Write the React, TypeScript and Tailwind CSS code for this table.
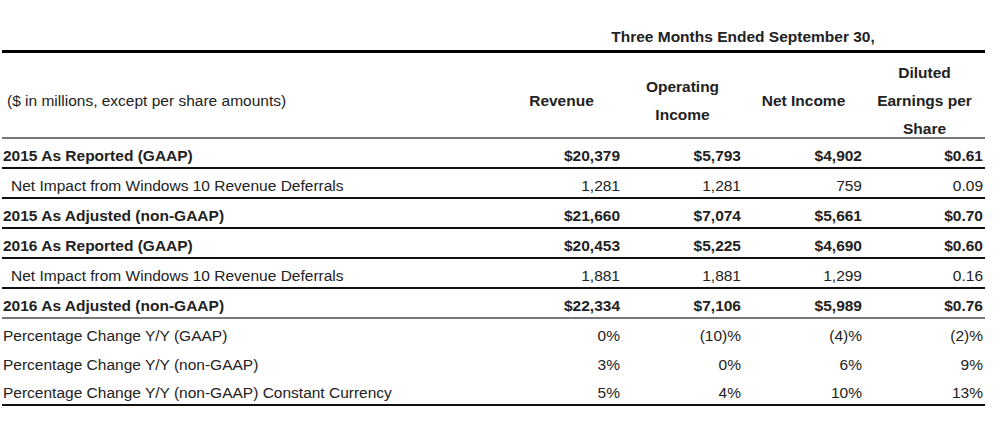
const cols = "grid grid-cols-[499px_121px_121px_121px_121px]";

type Row = {
  label: string;
  values: string[];
  bold?: boolean;
  indent?: boolean;
  border?: string;
  h?: string;
};

const rows: Row[] = [
  { label: "2015 As Reported (GAAP)", values: ["$20,379", "$5,793", "$4,902", "$0.61"], bold: true, border: "border-b-2 border-[#111]" },
  { label: "Net Impact from Windows 10 Revenue Deferrals", values: ["1,281", "1,281", "759", "0.09"], indent: true, border: "border-b-2 border-[#111]" },
  { label: "2015 As Adjusted (non-GAAP)", values: ["$21,660", "$7,074", "$5,661", "$0.70"], bold: true, border: "border-b-2 border-[#111]" },
  { label: "2016 As Reported (GAAP)", values: ["$20,453", "$5,225", "$4,690", "$0.60"], bold: true, border: "border-b-2 border-[#111]" },
  { label: "Net Impact from Windows 10 Revenue Deferrals", values: ["1,881", "1,881", "1,299", "0.16"], indent: true, border: "border-b-2 border-[#111]" },
  { label: "2016 As Adjusted (non-GAAP)", values: ["$22,334", "$7,106", "$5,989", "$0.76"], bold: true, border: "border-b-2 border-[#777]" },
  { label: "Percentage Change Y/Y (GAAP)", values: ["0%", "(10)%", "(4)%", "(2)%"], h: "h-[29px]" },
  { label: "Percentage Change Y/Y (non-GAAP)", values: ["3%", "0%", "6%", "9%"], h: "h-[29px]" },
  { label: "Percentage Change Y/Y (non-GAAP) Constant Currency", values: ["5%", "4%", "10%", "13%"], h: "h-[29px]", border: "border-b-2 border-[#111]" },
];

const TableRow: React.FC<{ row: Row }> = ({ row }) => {
  return (
    <div className={`${cols} ${row.h ?? "h-[30px]"} ${row.border ?? ""} ${row.bold ? "font-bold" : ""}`}>
      <div className={`flex items-center pt-[5px] ${row.indent ? "pl-[9px]" : "pl-px"}`}>{row.label}</div>
      {row.values.map((v, i) => (
        <div key={i} className="flex items-center justify-end pt-[5px] pr-[2px]">
          {v}
        </div>
      ))}
    </div>
  );
};

export default function App() {
  return (
    <div className="w-[1005px] h-[425px] bg-white text-[#222] text-[15.5px] leading-[20px] font-['Liberation_Sans',Arial,sans-serif]">
      <div className="ml-[2px] w-[983px]">
        <div className={`${cols} h-[53px] border-b-[3px] border-black font-bold`}>
          <div />
          <div className="col-span-4 flex items-end justify-center pb-[3px]">Three Months Ended September 30,</div>
        </div>
        <div className={`${cols} h-[86px] border-b-2 border-[#777] font-bold leading-[28px]`}>
          <div className="flex items-center pt-[5px] pl-[5px] font-normal">($ in millions, except per share amounts)</div>
          <div className="flex items-center justify-center text-center pt-[5px]">Revenue</div>
          <div className="flex items-center justify-center text-center pt-[5px]">
            Operating
            <br />
            Income
          </div>
          <div className="flex items-center justify-center text-center pt-[5px]">Net Income</div>
          <div className="flex items-center justify-center text-center pt-[6px]">
            Diluted
            <br />
            Earnings per
            <br />
            Share
          </div>
        </div>
        {rows.map((r, i) => (
          <TableRow key={i} row={r} />
        ))}
      </div>
    </div>
  );
}
